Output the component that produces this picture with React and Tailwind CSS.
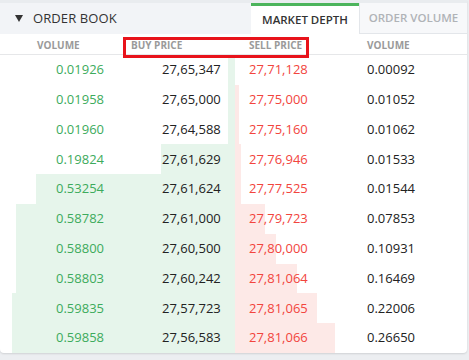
import React from 'react';

const rows = [
    { vol: '0.01926', buy: '27,65,347', sell: '27,71,128', svol: '0.00092', g: 7, r: 0 },
    { vol: '0.01958', buy: '27,65,000', sell: '27,75,000', svol: '0.01052', g: 7, r: 4 },
    { vol: '0.01960', buy: '27,64,588', sell: '27,75,160', svol: '0.01062', g: 7, r: 4 },
    { vol: '0.19824', buy: '27,61,629', sell: '27,76,946', svol: '0.01533', g: 74, r: 6 },
    { vol: '0.53254', buy: '27,61,624', sell: '27,77,525', svol: '0.01544', g: 199, r: 6 },
    { vol: '0.58782', buy: '27,61,000', sell: '27,79,723', svol: '0.07853', g: 219, r: 30 },
    { vol: '0.58800', buy: '27,60,500', sell: '27,80,000', svol: '0.10931', g: 219, r: 41 },
    { vol: '0.58803', buy: '27,60,242', sell: '27,81,064', svol: '0.16469', g: 219, r: 62 },
    { vol: '0.59835', buy: '27,57,723', sell: '27,81,065', svol: '0.22006', g: 223, r: 82 },
    { vol: '0.59858', buy: '27,56,583', sell: '27,81,066', svol: '0.26650', g: 223, r: 100 },
];

function App() {
    return (
        <div className="w-[469px] h-[360px] bg-[#eceef1] font-['Open_Sans',sans-serif] overflow-hidden">
            <div className="relative w-[467px] bg-white rounded-b-[4px] shadow-[0_1px_2px_rgba(0,0,0,0.12)]">
                {/* top bar */}
                <div className="flex items-end h-[34px] bg-[#f2f4f7] border-t-[3px] border-[#e9ecef]">
                    <div className="flex items-center w-[251px] h-full pl-[15px]">
                        <svg width="8" height="7" viewBox="0 0 8 7" className="mr-[10px]">
                            <polygon points="0,0 8,0 4,7" fill="#333" />
                        </svg>
                        <span className="text-[13px] text-[#333] tracking-[0.1px]">ORDER BOOK</span>
                    </div>
                    <div className="flex items-center justify-center w-[108px] h-[31px] -mt-[3px] bg-white border-t-[3px] border-[#4cb45c] text-[11.5px] font-semibold text-[#333]">
                        MARKET DEPTH
                    </div>
                    <div className="flex items-center justify-center w-[108px] h-full bg-[#f7f8fa] border-l border-b border-[#e3e6ea] text-[11.5px] font-semibold text-[#b0b3b7]">
                        ORDER VOLUME
                    </div>
                </div>

                {/* column headers */}
                <div className="flex items-center h-[21px] pt-[2px] border-b border-[#e6e7e9] text-[10px] font-bold text-[#9a9a9a]">
                    <span className="w-[117px] pl-[37px]">VOLUME</span>
                    <span className="w-[118px] pl-[14px]">BUY PRICE</span>
                    <span className="w-[117px] pl-[14px]">SELL PRICE</span>
                    <span className="pl-[15px]">VOLUME</span>
                </div>

                {/* rows */}
                <div>
                    {rows.map((row, i) => (
                        <div key={i} className="relative flex items-center h-[29.8px] text-[13px]">
                            <div className="absolute top-0 bottom-0 right-[232px] bg-[#e6f5eb]" style={{ width: row.g }} />
                            <div className="absolute top-0 bottom-0 left-[235px] bg-[#fde9e7]" style={{ width: row.r }} />
                            <span className="relative w-[117px] pl-[56px] text-[#3dab5c]">{row.vol}</span>
                            <span className="relative w-[118px] pl-[45px] text-[#222]">{row.buy}</span>
                            <span className="relative w-[117px] pl-[14px] text-[#f2453d]">{row.sell}</span>
                            <span className="relative pl-[15px] text-[#222]">{row.svol}</span>
                        </div>
                    ))}
                </div>

                {/* highlight box */}
                <div className="absolute left-[123px] top-[37px] w-[186px] h-[21px] border-[3px] border-[#e8131b]" />
            </div>
        </div>
    );
}

export default App;
